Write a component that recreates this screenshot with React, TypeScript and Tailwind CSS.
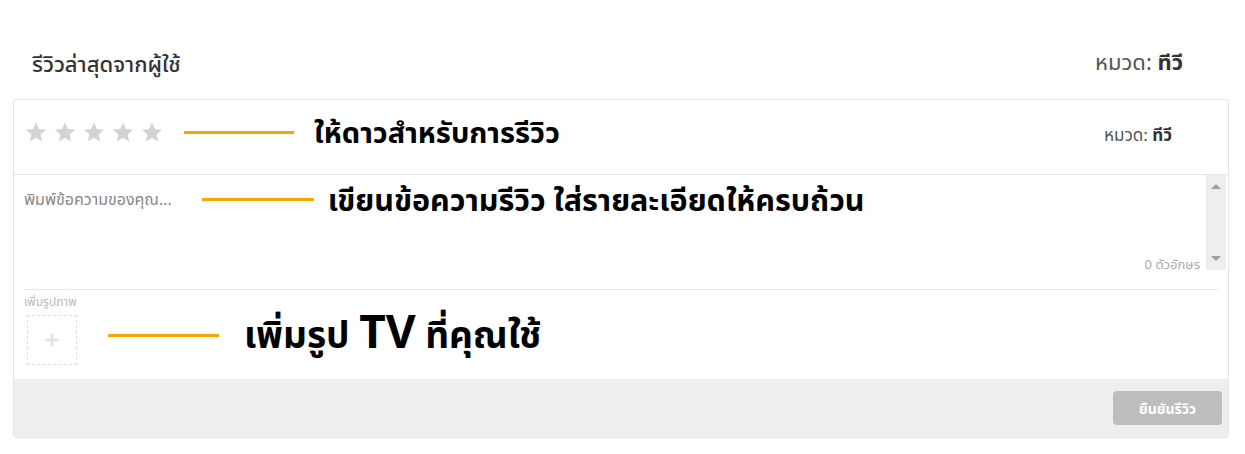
import { Plus } from "lucide-react";

const font = { fontFamily: '"Noto Sans", "Noto Sans Thai", Tahoma, sans-serif' };

function Star() {
  return (
    <svg viewBox="0 0 24 24" className="w-[24px] h-[24px] fill-[#d3d3d3]">
      <path d="M12 2.5l2.9 6.6 7.1.6-5.4 4.7 1.6 7-6.2-3.7-6.2 3.7 1.6-7L2 9.7l7.1-.6z" />
    </svg>
  );
}

function Callout({ line, text, className }: { line: string; text: React.ReactNode; className: string }) {
  return (
    <div className="flex items-center">
      <div className={`h-[3px] bg-[#f6a800] ${line}`} />
      <div className={`font-bold text-black whitespace-pre ${className}`}>{text}</div>
    </div>
  );
}

export default function App() {
  return (
    <div className="w-[1245px] h-[454px] bg-white pt-[40px] pl-[13px] pr-[16px]" style={font}>
      {/* Header */}
      <div className="flex items-center justify-between h-[46px] pl-[19px] pr-[46px]">
        <h2 className="text-[22px] text-[#333] font-medium leading-[30px]">รีวิวล่าสุดจากผู้ใช้</h2>
        <div className="text-[22px] text-[#555] leading-[30px] -mt-[5px]">
          หมวด: <span className="font-bold text-[#333]">ทีวี</span>
        </div>
      </div>

      {/* Card */}
      <div className="mt-[13px] border border-[#e3e3e3] rounded-[3px] overflow-hidden">
        {/* Stars row */}
        <div className="h-[75px] flex items-center justify-between pl-[10px] pr-[56px] pb-[10px] border-b border-[#e6e6e6]">
          <div className="flex items-center">
            <div className="flex gap-[5px]">
              <Star />
              <Star />
              <Star />
              <Star />
              <Star />
            </div>
            <div className="ml-[20px]">
              <Callout line="w-[110px] mr-[20px]" text="ให้ดาวสำหรับการรีวิว" className="text-[29px] leading-[36px]" />
            </div>
          </div>
          <div className="text-[17px] text-[#555] mt-[6px]">
            หมวด: <span className="font-bold text-[#333]">ทีวี</span>
          </div>
        </div>

        {/* Textarea */}
        <div className="h-[114px] flex flex-col">
          <div className="flex h-[95px]">
            <div className="flex-1 flex flex-col pl-[10px] pt-[7px] pr-[6px]">
              <div className="flex items-center">
                <span className="text-[16px] text-[#888]">พิมพ์ข้อความของคุณ...</span>
                <div className="ml-[30px]">
                  <Callout
                    line="w-[112px] mr-[14px]"
                    text="เขียนข้อความรีวิว ใส่รายละเอียดให้ครบถ้วน"
                    className="text-[30.5px] leading-[34px]"
                  />
                </div>
              </div>
              <div className="mt-auto -mb-[4px] self-end text-[13px] text-[#aaa]">0 ตัวอักษร</div>
            </div>
            <div className="w-[20px] bg-[#eeeeee] flex flex-col items-center justify-between py-[9px] mr-[2px]">
              <div className="w-0 h-0 border-l-[5px] border-r-[5px] border-b-[5px] border-l-transparent border-r-transparent border-b-[#a0a0a0]" />
              <div className="w-0 h-0 border-l-[5px] border-r-[5px] border-t-[5px] border-l-transparent border-r-transparent border-t-[#a0a0a0]" />
            </div>
          </div>
        </div>

        {/* Photos */}
        <div className="mx-[10px] border-t border-[#e8e8e8] h-[90px] pt-[5px]">
          <div className="text-[12px] text-[#bbb] leading-[14px]">เพิ่มรูปภาพ</div>
          <div className="flex items-center mt-[6px]">
            <div className="ml-[3px] w-[50px] h-[50px] border border-dashed border-[#e0e0e0] flex items-center justify-center">
              <Plus size={18} strokeWidth={4} className="text-[#e4e4e4]" />
            </div>
            <div className="ml-[31px] -mt-[16px]">
              <Callout
                line="w-[111px] mr-[25px] mt-[6px]"
                text={
                  <>
                    เพิ่มรูป <span className="text-[46px]">TV</span> ที่คุณใช้
                  </>
                }
                className="text-[37px] leading-[50px]"
              />
            </div>
          </div>
        </div>

        {/* Footer */}
        <div className="h-[58px] bg-[#eeeeee] flex items-center justify-end pr-[6px]">
          <button className="w-[109px] h-[34px] rounded-[4px] bg-[#bdbdbd] text-white text-[14px] font-bold">
            ยืนยันรีวิว
          </button>
        </div>
      </div>
    </div>
  );
}
